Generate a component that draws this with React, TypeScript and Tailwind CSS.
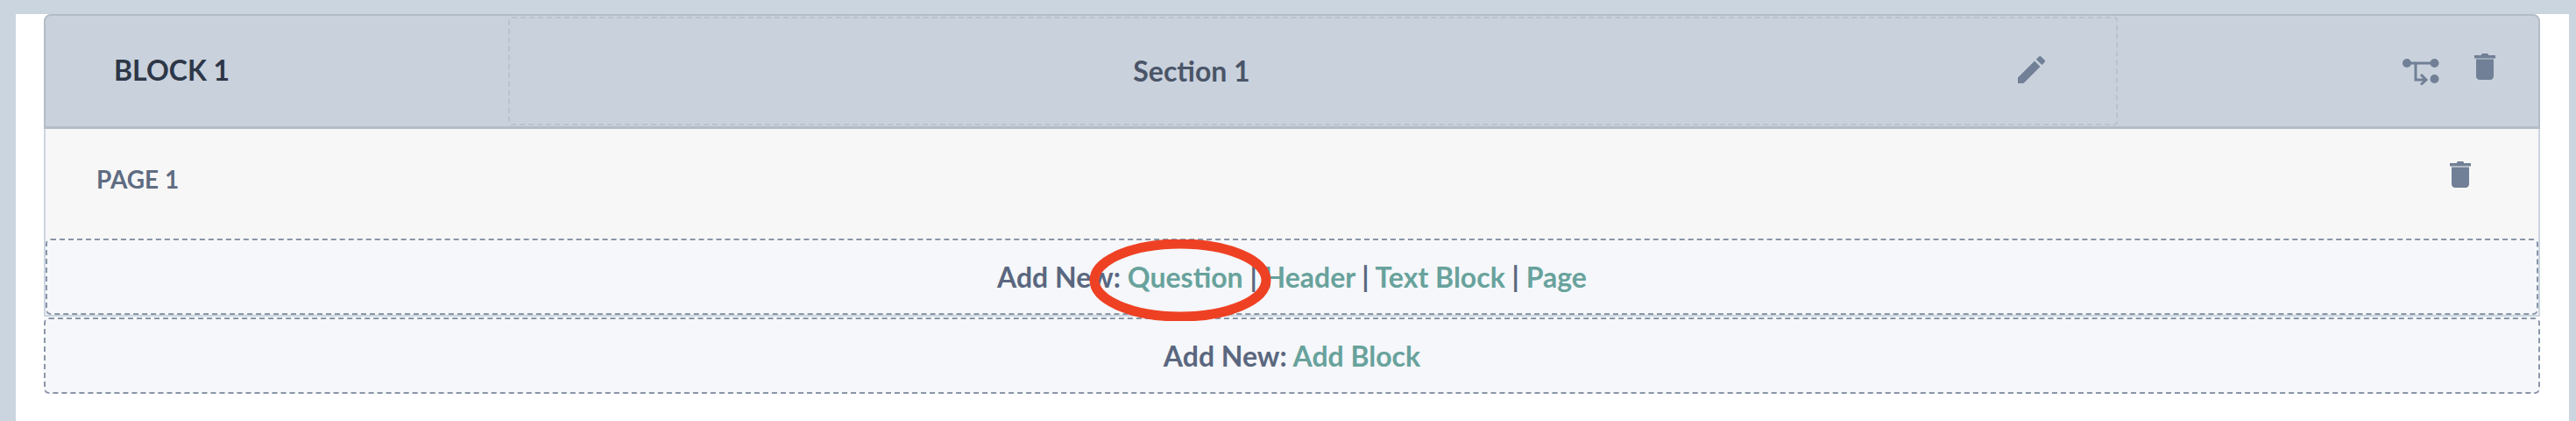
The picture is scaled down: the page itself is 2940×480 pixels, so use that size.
const TrashIcon = (props: { className?: string }) => {
  return (
    <svg viewBox="0 0 24 30" className={props.className} fill="#718096">
      <path d="M8 1.5C8 .7 8.700 0 9.500 0h5c.8 0 1.500.7 1.500 1.500V2h8v3.500H0V2h8z" />
      <path d="M2 6.500h20V26c0 2.200-1.800 4-4 4H6c-2.200 0-4-1.800-4-4z" />
    </svg>
  );
};

const PencilIcon = () => {
  return (
    <svg viewBox="3 3 18 18" className="w-[31px] h-[31px] shrink-0" fill="#718096">
      <path d="M3 17.250V21h3.750L17.810 9.940l-3.750-3.750L3 17.250zM20.710 7.040c.39-.39.39-1.020 0-1.410l-2.340-2.340c-.39-.39-1.020-.39-1.410 0l-1.830 1.830 3.750 3.750 1.830-1.830z" />
    </svg>
  );
};

const BranchIcon = () => {
  return (
    <svg viewBox="0 0 42 30" className="w-[42px] h-[30px] shrink-0 mt-[6px]">
      <circle cx="5" cy="5" r="5" fill="#718096" />
      <circle cx="36.500" cy="5" r="5" fill="#718096" />
      <circle cx="36.500" cy="23" r="5" fill="#718096" />
      <path d="M5 5h31M15 5v19h11M21 18l6 6-6 5.500" fill="none" stroke="#718096" strokeWidth="3" />
    </svg>
  );
};

const AddRow = (props: { links: string[]; className?: string; children?: any }) => {
  return (
    <div className={"relative flex items-center justify-center h-[87px] border-2 border-dashed border-[#8a96a8] rounded-[6px] bg-[#f5f7fa] text-[32px] font-bold text-[#5a677f] " + (props.className || "")}>
      <span className="whitespace-pre">
        Add New:{" "}
        {props.links.map((link, i) => (
          <span key={link}>
            {i > 0 ? " | " : ""}
            <span className="text-[#68a29c]">{link}</span>
          </span>
        ))}
      </span>
      {props.children}
    </div>
  );
};

export default function App() {
  return (
    <div className="h-[480px] overflow-hidden bg-[#cbd5e0] pt-4 pl-[18px] pr-2 font-['Lato',sans-serif]">
      <div className="h-[464px] bg-white pl-8 pr-[33px]">
        {/* block header */}
        <div className="flex h-[131px] bg-[#c9d1dc] border-t-2 border-x-2 border-b-[3px] border-[#b2bcc7] rounded-t-[8px] pb-[1px]">
          <div className="w-[528px] shrink-0 flex items-center pl-[78px] pb-[1px] text-[32px] font-bold text-[#2d3748]">
            BLOCK 1
          </div>
          <div className="flex flex-1 items-center border-2 border-dashed border-[#b9c3cf] rounded-[4px] mt-[1px]">
            <div className="flex-1 text-center pl-[2px] text-[32px] font-bold text-[#4a5568]">Section 1</div>
            <div className="ml-[167px] mr-[81px] mb-[3px]">
              <PencilIcon />
            </div>
          </div>
          <div className="w-[480px] shrink-0 flex items-start justify-end gap-[40px] pt-[43px] pr-[49px]">
            <BranchIcon />
            <TrashIcon className="w-6 h-[30px] shrink-0" />
          </div>
        </div>

        {/* page */}
        <div className="bg-[#f7f7f7] border-x-2 border-b-2 border-[#cbd5e0]">
          <div className="flex items-center justify-between h-[125px] pl-[58px] pr-[77px] pb-[12px]">
            <span className="text-[28px] font-bold text-[#5f6c82]">PAGE 1</span>
            <TrashIcon className="w-6 h-[30px] shrink-0 mb-[10px]" />
          </div>
          <AddRow links={["Question", "Header", "Text Block", "Page"]}>
            <svg viewBox="0 0 208 93" className="absolute z-10 left-[1189px] top-[-1px] w-[208px] h-[93px]">
              <ellipse cx="104" cy="46.500" rx="98" ry="41.500" fill="none" stroke="#ee4124" strokeWidth="11" />
            </svg>
          </AddRow>
        </div>
        <AddRow links={["Add Block"]} className="mt-[1px]" />
      </div>
    </div>
  );
}
